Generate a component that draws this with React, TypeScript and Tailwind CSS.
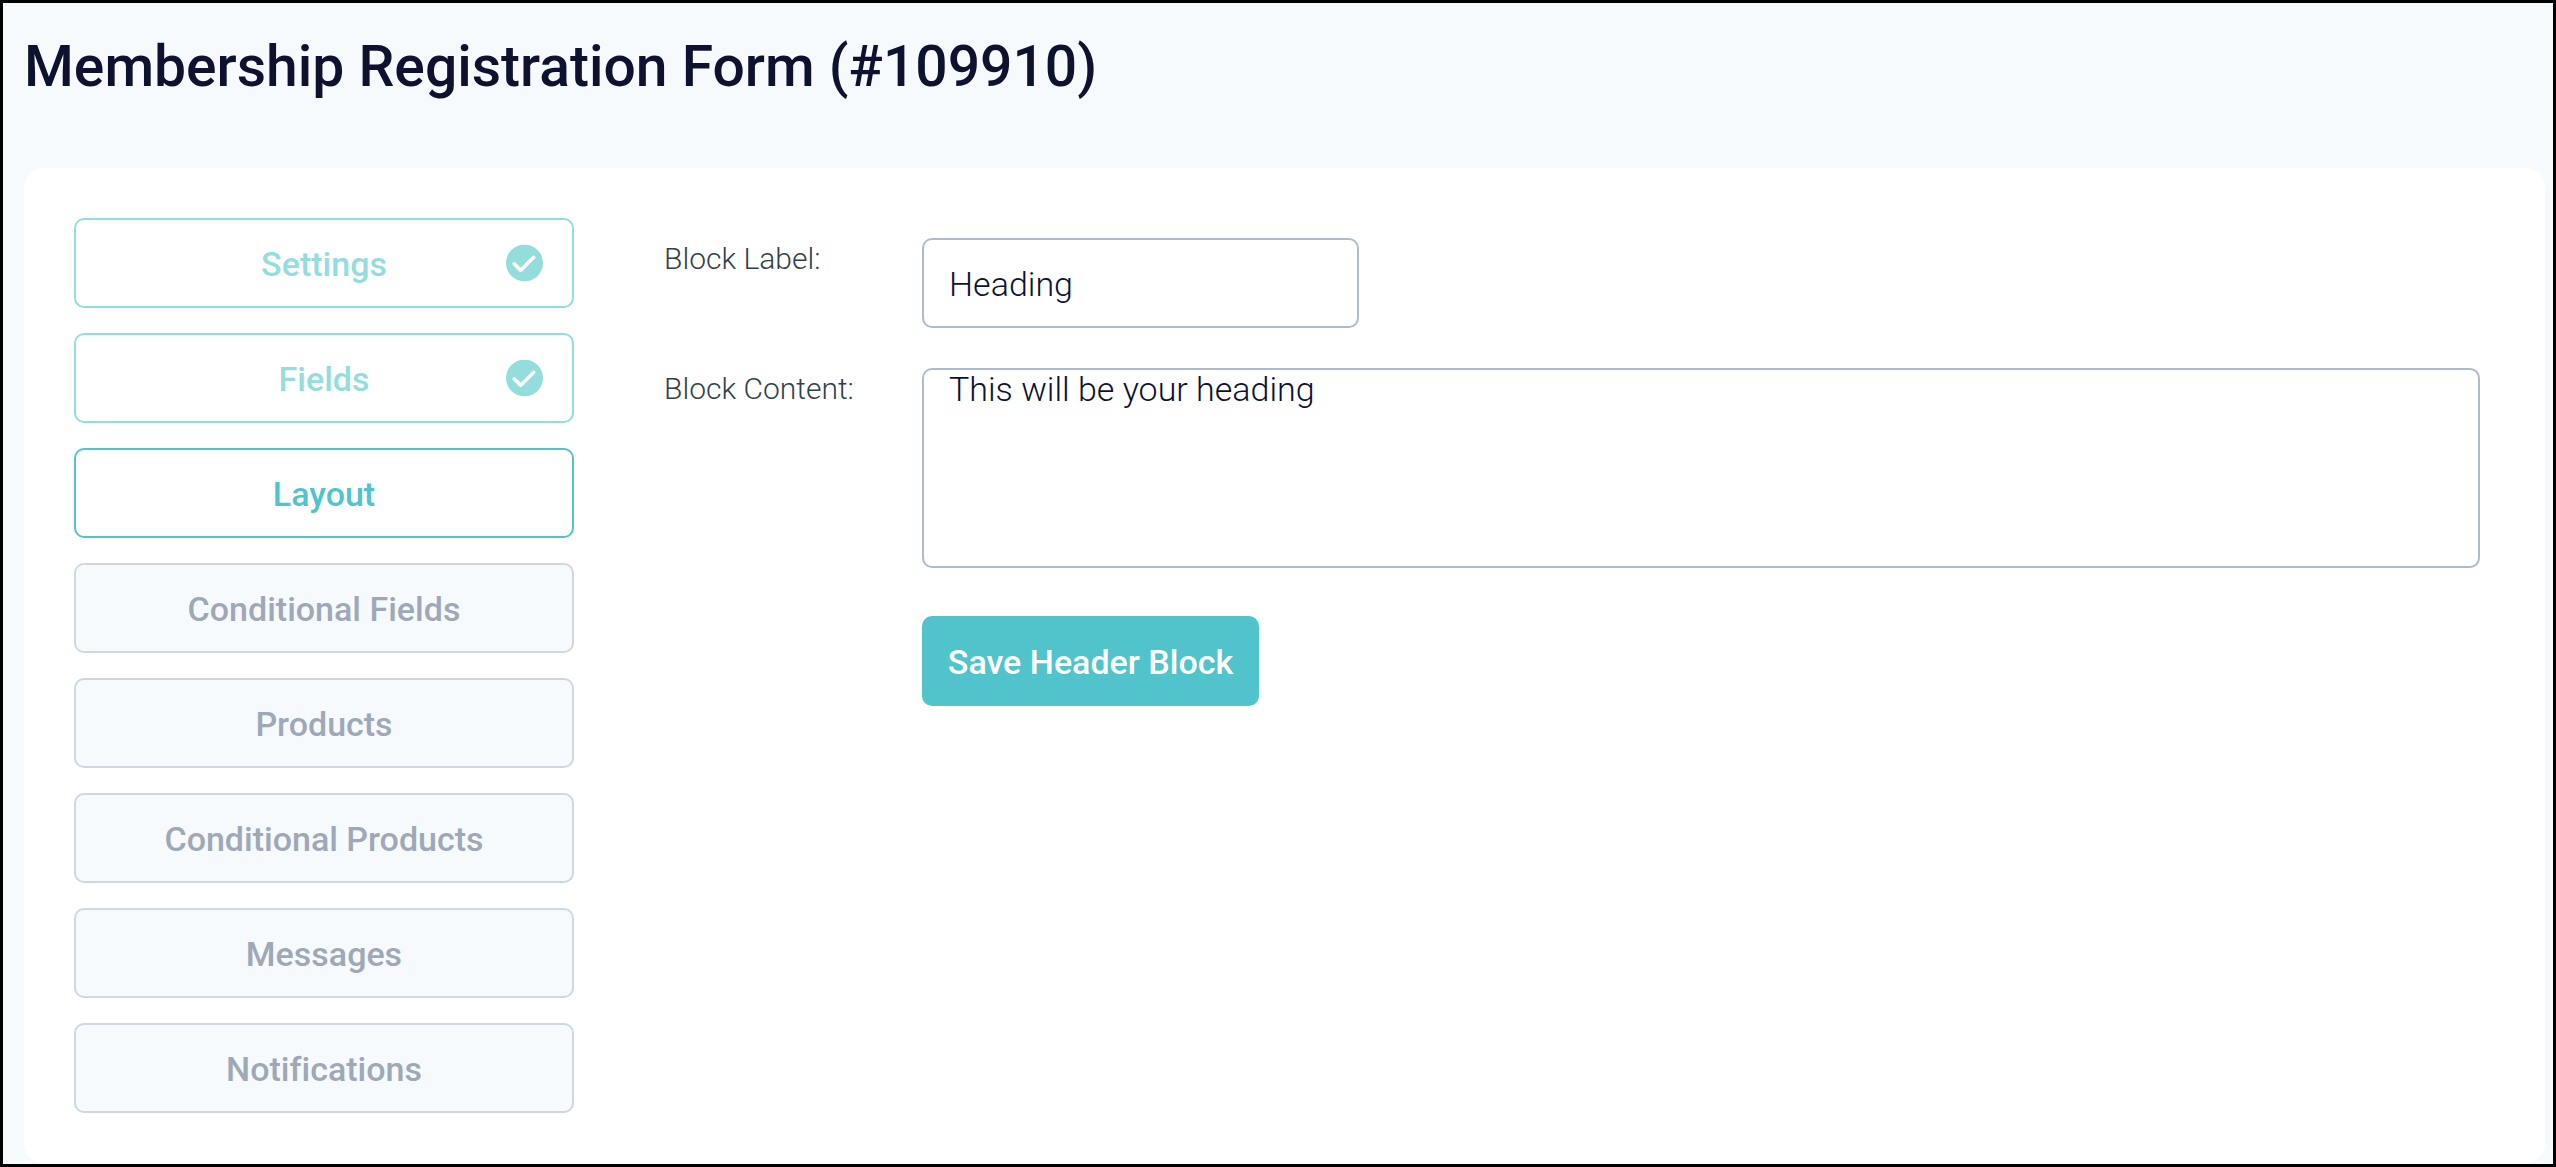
import { useState } from "react";
import clsx from "clsx";

type StepState = "done" | "active" | "pending";

type Step = { label: string; state: StepState };

const STEPS: Step[] = [
  { label: "Settings", state: "done" },
  { label: "Fields", state: "done" },
  { label: "Layout", state: "active" },
  { label: "Conditional Fields", state: "pending" },
  { label: "Products", state: "pending" },
  { label: "Conditional Products", state: "pending" },
  { label: "Messages", state: "pending" },
  { label: "Notifications", state: "pending" },
];

function CheckBadge() {
  return (
    <svg
      className="absolute top-1/2 right-[29px] size-[37px] -translate-y-1/2"
      viewBox="0 0 37 37"
      fill="none"
      aria-hidden="true"
    >
      <circle cx="18.5" cy="18.5" r="18.5" fill="#94dddd" />
      <path d="M8.2 19.3l6.5 6.5 13-13" stroke="#fff" strokeWidth="3.6" strokeLinecap="round" strokeLinejoin="round" />
    </svg>
  );
}

function StepButton({ label, state }: Step) {
  return (
    <button
      type="button"
      aria-current={state === "active" ? "step" : undefined}
      className={clsx(
        "relative h-[90px] w-full rounded-[10px] border-2 pt-0.5 text-[34px] font-medium [font-variant-ligatures:none]",
        state === "done" && "border-[#94dddd] bg-white text-[#94dddd]",
        state === "active" && "border-[#50c4ca] bg-white text-[#50c4ca]",
        state === "pending" && "border-[#ced8e1] bg-[#f6fafd] text-[#9ea8b6]"
      )}
    >
      {label}
      {state === "done" && <CheckBadge />}
    </button>
  );
}

export default function App() {
  const [label, setLabel] = useState("Heading");
  const [content, setContent] = useState("This will be your heading");

  return (
    <div className="min-h-screen border-[3px] border-black bg-[#f6fafd] pr-2 pb-px pl-[21px] font-['Roboto',sans-serif]">
      <h1 className="pt-7 pb-[65px] text-[57px] leading-[72px] font-medium text-[#0e122f]">
        Membership Registration Form (#109910)
      </h1>

      <main className="flex items-start gap-[90px] rounded-[20px] bg-white py-[50px] pr-[65px] pl-[50px]">
        <nav className="flex w-[500px] shrink-0 flex-col gap-[25px]" aria-label="Form steps">
          {STEPS.map((step) => (
            <StepButton key={step.label} {...step} />
          ))}
        </nav>

        <form
          className="grid min-w-0 flex-1 grid-cols-[258px_minmax(0,1fr)] items-start gap-y-10 pt-5"
          onSubmit={(e) => e.preventDefault()}
        >
          <label htmlFor="block-label" className="text-[30px] leading-[42px] font-light text-[#333f4a]">
            Block Label:
          </label>
          <input
            id="block-label"
            type="text"
            value={label}
            onChange={(e) => setLabel(e.target.value)}
            className="h-[90px] w-[437px] rounded-[10px] border-2 border-[#aebbcb] bg-white px-[25px] pt-0.5 text-[34px] font-light text-[#0e122f] outline-none"
          />

          <label htmlFor="block-content" className="text-[30px] leading-[42px] font-light text-[#333f4a]">
            Block Content:
          </label>
          <textarea
            id="block-content"
            value={content}
            onChange={(e) => setContent(e.target.value)}
            className="block h-[200px] w-full resize-none rounded-[10px] border-2 border-[#aebbcb] bg-white px-[25px] text-[34px] leading-[38px] font-light text-[#0e122f] outline-none"
          />

          <button
            type="submit"
            className="col-start-2 mt-2 h-[90px] w-[337px] rounded-[10px] bg-[#50c4ca] pt-0.5 text-[34px] font-medium whitespace-nowrap text-white"
          >
            Save Header Block
          </button>
        </form>
      </main>
    </div>
  );
}
